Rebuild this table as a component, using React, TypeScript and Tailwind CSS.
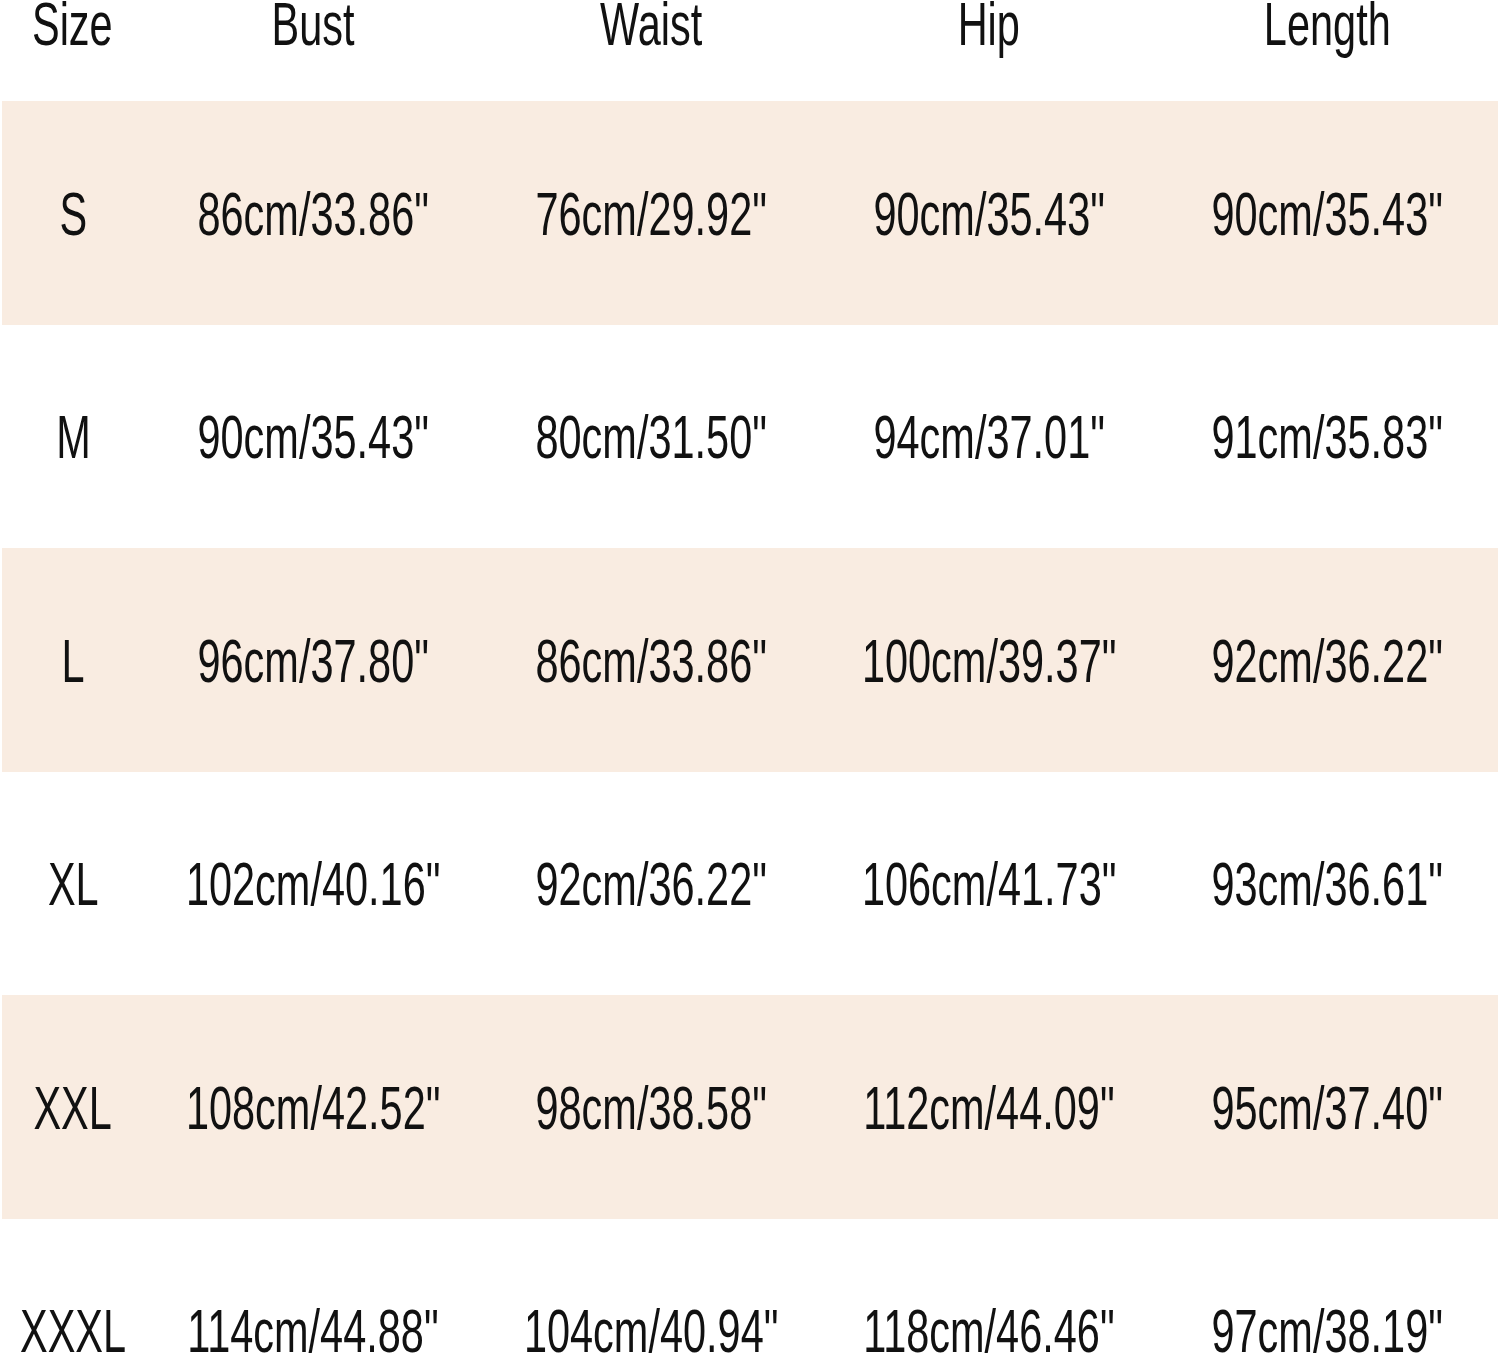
const headers = ['Size', 'Bust', 'Waist', 'Hip', 'Length']

const rows = [
  ['S', '86cm/33.86"', '76cm/29.92"', '90cm/35.43"', '90cm/35.43"'],
  ['M', '90cm/35.43"', '80cm/31.50"', '94cm/37.01"', '91cm/35.83"'],
  ['L', '96cm/37.80"', '86cm/33.86"', '100cm/39.37"', '92cm/36.22"'],
  ['XL', '102cm/40.16"', '92cm/36.22"', '106cm/41.73"', '93cm/36.61"'],
  ['XXL', '108cm/42.52"', '98cm/38.58"', '112cm/44.09"', '95cm/37.40"'],
  ['XXXL', '114cm/44.88"', '104cm/40.94"', '118cm/46.46"', '97cm/38.19"'],
]

function Cell({ text }: { text: string }) {
  return (
    <div className="flex items-center justify-center">
      <span className="inline-block scale-x-[0.68] whitespace-nowrap text-[61px] leading-none text-[#111]">
        {text}
      </span>
    </div>
  )
}

export default function App() {
  return (
    <div className="h-[1356px] w-[1500px] overflow-hidden bg-white font-['Liberation_Sans',Arial,sans-serif]">
      <div className="grid h-[101px] grid-cols-[144px_repeat(4,338px)] items-start">
        {headers.map(h => (
          <div key={h} className="flex justify-center">
            <span className="inline-block scale-x-[0.68] whitespace-nowrap text-[61px] leading-[49px] text-[#111]">
              {h}
            </span>
          </div>
        ))}
      </div>
      {rows.map((r, i) => (
        <div
          key={r[0]}
          className={
            i % 2 === 0
              ? 'mx-[2px] grid h-[223.5px] grid-cols-[142px_repeat(4,338px)] bg-[#f9ece1] pt-[3px]'
              : 'mx-[2px] grid h-[223.5px] grid-cols-[142px_repeat(4,338px)] bg-white pt-[3px]'
          }
        >
          {r.map((c, j) => (
            <Cell key={j} text={c} />
          ))}
        </div>
      ))}
    </div>
  )
}
